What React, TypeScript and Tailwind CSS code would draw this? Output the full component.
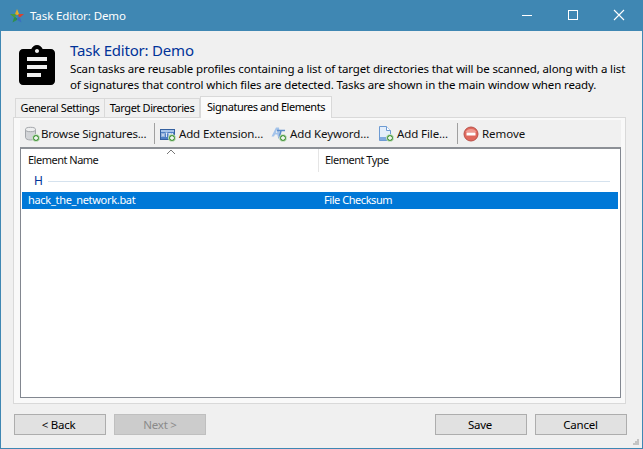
import React from 'react';

const PlusBadge = () => (
  <g>
    <circle cx="12" cy="12" r="3.600" fill="#4f9a45" stroke="#d8ecd4" strokeWidth="0.8" />
    <path d="M10 12h4M12 10v4" stroke="#fff" strokeWidth="1.300" />
  </g>
);

const BrowseIcon = () => (
  <svg width="16" height="16" viewBox="0 0 16 16" className="shrink-0">
    <path d="M1.500 3.500v8c0 1.400 2.400 2.500 5 2.500s5-1.100 5-2.500v-8z" fill="#d2d4d7" stroke="#a3a6aa" />
    <ellipse cx="6.500" cy="3.500" rx="5" ry="2.200" fill="#eeeff0" stroke="#a3a6aa" />
    <PlusBadge />
  </svg>
);

const ExtensionIcon = () => (
  <svg width="16" height="16" viewBox="0 0 16 16" className="shrink-0">
    <rect x="0.500" y="3.500" width="14" height="10" fill="#4f7fc4" stroke="#34609f" />
    <rect x="1" y="4" width="13" height="2" fill="#a9c5ea" />
    <path d="M2 7v4M4 7v4M2 9h2M5.500 7h2M6.500 7v4M9 11V7l1 2 1-2v4M12.500 7v4h1.200" stroke="#fff" strokeWidth="0.8" fill="none" />
    <PlusBadge />
  </svg>
);

const KeywordIcon = () => (
  <svg width="16" height="16" viewBox="0 0 16 16" className="shrink-0">
    <path d="M0.500 10.500 5 1.500h3l1 9H6.600l-.2-2H4l-1 2zM4.800 6.800h1.500l-.3-3z" fill="#a3c3ea" fillRule="evenodd" />
    <path d="M6 4.500h8M10 4.500l-2 8" stroke="#5b8cca" strokeWidth="1.600" fill="none" />
    <PlusBadge />
  </svg>
);

const FileIcon = () => (
  <svg width="16" height="16" viewBox="0 0 16 16" className="shrink-0">
    <path d="M1.500 0.500h7l4 4v10h-11z" fill="#e4eefa" stroke="#6d9bd3" />
    <path d="M8.500 0.500v4h4" fill="#fff" stroke="#6d9bd3" />
    <rect x="2" y="11" width="9" height="3" fill="#7fa9de" />
    <PlusBadge />
  </svg>
);

const RemoveIcon = () => (
  <svg width="16" height="16" viewBox="0 0 16 16" className="shrink-0">
    <circle cx="8" cy="8" r="7" fill="#e0685c" stroke="#b9524a" />
    <path d="M2.500 6a6 5 0 0 1 11 0z" fill="#ef9c93" />
    <rect x="3.500" y="6.500" width="9" height="3" fill="#fff" />
  </svg>
);

const AppStar = () => (
  <svg width="16" height="16" viewBox="0 0 16 16">
    <path d="M8 1 6 6 8 8z" fill="#e5a823" />
    <path d="M8 1l2 5-2 2z" fill="#e8b32a" />
    <path d="M10 6l5 0-4 3.500-3-1.500z" fill="#d9432f" />
    <path d="M11 9.500l1.500 5L8 12V8z" fill="#3a6fc1" />
    <path d="M8 8v4l-4.500 2.500L5 9.500z" fill="#2f8f4e" />
    <path d="M6 6H1l4 3.500L8 8z" fill="#4a9c3f" />
    <path d="M8 6.500 9.800 8 9 10H7L6.200 8z" fill="#3f87b3" />
  </svg>
);

const ClipboardIcon = () => (
  <svg width="36" height="40" viewBox="3 1 18 20" className="shrink-0">
    <path d="M19 3h-4.180C14.400 1.840 13.300 1 12 1c-1.300 0-2.400.84-2.820 2H5c-1.100 0-2 .9-2 2v14c0 1.100.9 2 2 2h14c1.100 0 2-.9 2-2V5c0-1.100-.9-2-2-2zm-7 0c.55 0 1 .45 1 1s-.45 1-1 1-1-.45-1-1 .45-1 1-1zm2 14H7v-2h7v2zm3-4H7v-2h10v2zm0-4H7V7h10v2z" fill="#000" />
  </svg>
);

const Separator = ({ className }: { className: string }) => <div className={`-mt-px h-[21px] w-px shrink-0 bg-[#a0a0a0] ${className}`} />;

const ToolButton = ({ icon, label, className }: { icon: React.ReactNode; label: string; className: string }) => (
  <div className={`flex shrink-0 items-center ${className}`}>
    {icon}
    <span className="-mt-px text-[11.500px] leading-4 text-[#111]">{label}</span>
  </div>
);

const FooterButton = ({ label, disabled, className }: { label: string; disabled?: boolean; className?: string }) => (
  <button
    className={`block h-[21px] w-[92px] border text-[11.500px] leading-4 tracking-[-0.25px] ${
      disabled ? 'border-[#bfbfbf] bg-[#cccccc] text-[#8a8a8a]' : 'border-[#adadad] bg-[#e1e1e1] text-black'
    } ${className ?? ''}`}
  >
    {label}
  </button>
);

export default function App() {
  return (
    <div
      className="relative flex h-[449px] w-[643px] flex-col overflow-hidden border-x border-b border-[#3f87b3] bg-[#f0f0f0] text-black"
      style={{ fontFamily: '"Noto Sans", sans-serif' }}
    >
      {/* Title bar */}
      <div className="-mx-px flex h-[31px] shrink-0 items-center bg-[#3f87b3]">
        <div className="ml-[9px]">
          <AppStar />
        </div>
        <span className="ml-[5px] text-[11.500px] tracking-[-0.1px] text-white">Task Editor: Demo</span>
        <div className="ml-auto flex items-center">
          <svg width="46" height="31" viewBox="0 0 46 31">
            <path d="M18 15.500h10" stroke="#fff" />
          </svg>
          <svg width="46" height="31" viewBox="0 0 46 31">
            <rect x="18.500" y="10.500" width="9" height="9" fill="none" stroke="#fff" />
          </svg>
          <svg width="46" height="31" viewBox="0 0 46 31" className="mr-[1px]">
            <path d="M18 10l10 10M28 10 18 20" stroke="#fff" strokeWidth="1.100" />
          </svg>
        </div>
      </div>

      {/* Description */}
      <div className="flex h-[65px] shrink-0 pl-[18px] pt-[14px]">
        <ClipboardIcon />
        <div className="ml-[15px] -mt-[5px] whitespace-nowrap">
          <div className="text-[15px] leading-[21px] tracking-[-0.2px] text-[#003399]">Task Editor: Demo</div>
          <p className="text-[11.500px] leading-4 tracking-[-0.13px] text-black">
            Scan tasks are reusable profiles containing a list of target directories that will be scanned, along with a list
            <br />
            of signatures that control which files are detected. Tasks are shown in the main window when ready.
          </p>
        </div>
      </div>

      {/* Tabs */}
      <div className="relative z-10 ml-[14px] flex h-[21px] shrink-0 items-end">
        <div className="flex h-[19px] w-[90px] items-center justify-center border border-b-0 border-[#d9d9d9] bg-[#f0f0f0] text-[11px] tracking-[-0.4px]">
          General Settings
        </div>
        <div className="flex h-[19px] w-[95px] items-center justify-center border border-b-0 border-l-0 border-[#d9d9d9] bg-[#f0f0f0] text-[11px] tracking-[-0.4px]">
          Target Directories
        </div>
        <div className="-mb-px flex h-[22px] w-[132px] items-center justify-center border border-b-0 border-[#d9d9d9] bg-[#fafafa] pb-px text-[11px] tracking-[-0.45px]">
          Signatures and Elements
        </div>
      </div>

      {/* Tab panel */}
      <div className="ml-[12px] flex h-[287px] w-[613px] shrink-0 flex-col border border-[#d9d9d9] bg-[#f9f9f9] pb-[5px] pl-[6px] pr-[4px] pt-[2px]">
        <div className="flex h-[27px] shrink-0 items-center bg-[#f0f0f0] pl-[4px] pt-px">
          <ToolButton icon={<BrowseIcon />} label="Browse Signatures..." className="w-[124px] gap-[1px] tracking-[-0.22px]" />
          <Separator className="ml-[6px] mr-[5px]" />
          <ToolButton icon={<ExtensionIcon />} label="Add Extension..." className="w-[111px] gap-[3px] tracking-[-0.15px]" />
          <ToolButton icon={<KeywordIcon />} label="Add Keyword..." className="w-[107px] gap-[3px] tracking-[-0.1px]" />
          <ToolButton icon={<FileIcon />} label="Add File..." className="w-[77px] gap-[3px] tracking-[-0.1px]" />
          <Separator className="ml-[2px] mr-[5px]" />
          <ToolButton icon={<RemoveIcon />} label="Remove" className="gap-[3px] tracking-[-0.05px]" />
        </div>

        {/* Element list */}
        <div className="relative min-h-0 flex-1 border border-t-2 border-[#828790] border-t-[#8c9096] bg-white">
          <svg width="10" height="6" viewBox="0 0 10 6" className="absolute left-[145px] top-0">
            <path d="M1 5l4-4 4 4" fill="none" stroke="#777" />
          </svg>
          <div className="flex h-[23px] items-center text-[11px] tracking-[-0.5px] text-[#111]">
            <div className="flex h-full w-[298px] items-center border-r border-[#e5e5e5] pl-[7px]">Element Name</div>
            <div className="pl-[6px]">Element Type</div>
          </div>
          <div className="flex h-[18px] items-center pl-[13px] pr-[10px]">
            <span className="text-[12px] text-[#003399]">H</span>
            <div className="ml-[5px] h-px flex-1 bg-[#d5e2ee]" />
          </div>
          <div className="ml-px mr-[2px] mt-[2px] flex h-[17px] items-center bg-[#0078d7] text-[11px] text-white">
            <div className="w-[296px] pl-[6px] tracking-[-0.3px]">hack_the_network.bat</div>
            <div className="pl-[6px] tracking-[-0.45px]">File Checksum</div>
          </div>
        </div>
      </div>

      {/* Footer buttons */}
      <div className="mt-[10px] flex pl-[13px] pr-[15px]">
        <FooterButton label="< Back" className="pr-[3px]" />
        <div className="ml-[8px]">
          <FooterButton label="Next >" disabled />
        </div>
        <div className="ml-auto flex gap-[8px]">
          <FooterButton label="Save" className="pr-[2px]" />
          <FooterButton label="Cancel" className="pr-[1px]" />
        </div>
      </div>

      {/* Resize grip */}
      <svg width="8" height="8" viewBox="0 0 8 8" className="absolute bottom-[2px] right-[2px]">
        <path d="M5 1h2v2H5zM3 3h2v2H3zM5 3h2v2H5zM1 5h2v2H1zM3 5h2v2H3zM5 5h2v2H5z" fill="#c4c4c4" />
      </svg>
    </div>
  );
}
